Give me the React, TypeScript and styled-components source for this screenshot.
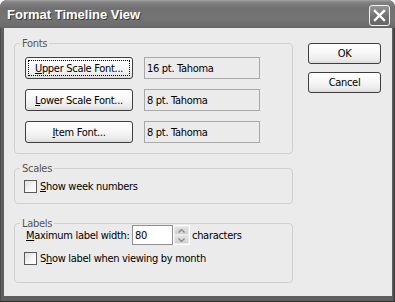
import React from "react";
import styled, { createGlobalStyle } from "styled-components";

const GlobalStyle = createGlobalStyle`
  html, body { margin: 0; padding: 0; background: #ffffff; }
  body {
    font-family: "DejaVu Sans Condensed", "DejaVu Sans", "Liberation Sans", sans-serif;
    font-size: 11px;
    letter-spacing: -0.3px;
    color: #000;
  }
  * { box-sizing: border-box; }
`;

const Window = styled.div`
  width: 395px;
  height: 302px;
  display: flex;
  flex-direction: column;
  border-radius: 7px 7px 0 0;
  overflow: hidden;
  background: #575757;
`;

const TitleBar = styled.div`
  height: 28px;
  flex: none;
  display: flex;
  justify-content: space-between;
  align-items: flex-start;
  padding: 0 5px 0 7px;
  background: linear-gradient(
    to bottom,
    #a4a4a4 0px,
    #848484 2px,
    #707070 8px,
    #747474 18px,
    #6c6c6c 26px,
    #666666 28px
  );
`;

const Title = styled.span`
  margin-top: 7px;
  font-family: "Liberation Sans", Arial, sans-serif;
  font-weight: bold;
  font-size: 13px;
  letter-spacing: 0;
  line-height: 16px;
  color: #ffffff;
  text-shadow: 1px 1px 0 #3a3a3a;
`;

const CloseButton = styled.div`
  margin-top: 5px;
  width: 21px;
  height: 21px;
  border: 1px solid #f2f2f2;
  border-radius: 3px;
  background: linear-gradient(to bottom, #959595, #6f6f6f 60%, #666666);
  display: flex;
  align-items: center;
  justify-content: center;
`;

const Frame = styled.div`
  flex: 1;
  display: flex;
  padding: 0 3px 5px 4px;
  background: linear-gradient(to right, #3c3c3c 0, #5f5f5f 1px, #5f5f5f 393px, #3c3c3c 394px);
  border-bottom: 1px solid #2e2e2e;
`;

const Client = styled.div`
  flex: 1;
  display: flex;
  gap: 15px;
  padding: 9px 0 0 10px;
  background: #ebebeb;
`;

const LeftColumn = styled.div`
  width: 279px;
  display: flex;
  flex-direction: column;
`;

const RightColumn = styled.div`
  padding-top: 6px;
  display: flex;
  flex-direction: column;
  gap: 8px;
`;

const Group = styled.fieldset<{ $mt?: number; $pt?: number; $pb?: number }>`
  margin: ${(p) => p.$mt ?? 0}px 0 0 0;
  padding: ${(p) => p.$pt ?? 0}px 10px ${(p) => p.$pb ?? 10}px 10px;
  border: 1px solid #d0d0d0;
  border-radius: 4px;
  min-width: 0;
  display: flex;
  flex-direction: column;
`;

const Legend = styled.legend`
  padding: 0 2px;
  margin-left: -5px;
  line-height: 13px;
  height: 13px;
  color: #555555;
`;

const FontRows = styled.div`
  display: flex;
  flex-direction: column;
  gap: 10px;
`;

const FontRow = styled.div`
  display: grid;
  grid-template-columns: 108px 116px;
  column-gap: 11px;
  height: 22px;
`;

const Button = styled.div<{ $focused?: boolean; $w?: number; $h?: number }>`
  position: relative;
  width: ${(p) => (p.$w ? `${p.$w}px` : "auto")};
  height: ${(p) => p.$h ?? 22}px;
  border: 1px solid #3e3e3e;
  border-radius: 3px;
  background: linear-gradient(to bottom, #ffffff 0%, #f7f7f7 45%, #ececec 80%, #dcdcdc 100%);
  display: flex;
  align-items: center;
  justify-content: center;
  line-height: 13px;
  white-space: nowrap;
  color: #000;
  ${(p) =>
    p.$focused &&
    `
    &::after {
      content: "";
      position: absolute;
      inset: 2px;
      border: 1px dotted #000;
    }
  `}
`;

const ReadBox = styled.div`
  height: 22px;
  border: 1px solid #a9a9a9;
  background: #ebebeb;
  padding-left: 2px;
  display: flex;
  align-items: center;
  line-height: 13px;
`;

const CheckRow = styled.div<{ $mt?: number }>`
  margin-top: ${(p) => p.$mt ?? 0}px;
  display: flex;
  align-items: center;
  gap: 3px;
  height: 13px;
  margin-left: -1px;
  line-height: 13px;
  white-space: nowrap;
`;

const CheckBox = styled.span`
  width: 13px;
  height: 13px;
  flex: none;
  border: 1px solid #5a5a5a;
  background: linear-gradient(135deg, #dcdcdc 0%, #f4f4f4 50%, #ffffff 100%);
`;

const WidthRow = styled.div`
  margin-top: -5px;
  display: flex;
  align-items: center;
  height: 20px;
`;

const FieldLabel = styled.span`
  width: 107px;
  flex: none;
  padding-left: 1px;
  line-height: 13px;
  white-space: nowrap;
`;

const NumberInput = styled.div`
  width: 41px;
  height: 20px;
  flex: none;
  border: 1px solid #8f8f8f;
  background: #ffffff;
  padding-left: 2px;
  display: flex;
  align-items: center;
  line-height: 13px;
`;

const Spinner = styled.div`
  width: 17px;
  height: 20px;
  flex: none;
  border: 1px solid #ffffff;
  background: #d9d9d9;
  display: flex;
  flex-direction: column;
`;

const SpinHalf = styled.div`
  flex: 1;
  display: flex;
  align-items: center;
  justify-content: center;
  background: linear-gradient(to bottom, #e3e3e3, #d0d0d0);
  border: 1px solid #eaeaea;
`;

const Suffix = styled.span`
  margin-left: 2px;
  line-height: 13px;
`;

const Chevron = ({ up }: { up?: boolean }) => (
  <svg width="7" height="4" viewBox="0 0 7 4">
    <path
      d={up ? "M0.5 3.5 L3.5 0.5 L6.5 3.5" : "M0.5 0.5 L3.5 3.5 L6.5 0.5"}
      fill="none"
      stroke="#8a8a8a"
      strokeWidth="1.3"
    />
  </svg>
);

const fontRows = [
  { key: "U", rest: "pper Scale Font...", value: "16 pt. Tahoma", focused: true },
  { key: "L", rest: "ower Scale Font...", value: "8 pt. Tahoma" },
  { key: "I", rest: "tem Font...", value: "8 pt. Tahoma" },
];

export default function App() {
  return (
    <>
      <GlobalStyle />
      <Window>
        <TitleBar>
          <Title>Format Timeline View</Title>
          <CloseButton>
            <svg width="13" height="13" viewBox="0 0 13 13">
              <path d="M2 2 L11 11 M11 2 L2 11" stroke="#ffffff" strokeWidth="2.4" strokeLinecap="square" />
            </svg>
          </CloseButton>
        </TitleBar>
        <Frame>
          <Client>
            <LeftColumn>
              <Group $pt={7} $pb={10}>
                <Legend>Fonts</Legend>
                <FontRows>
                  {fontRows.map((r) => (
                    <FontRow key={r.key}>
                      <Button $focused={r.focused}>
                        <span>
                          <u>{r.key}</u>
                          {r.rest}
                        </span>
                      </Button>
                      <ReadBox>{r.value}</ReadBox>
                    </FontRow>
                  ))}
                </FontRows>
              </Group>
              <Group $mt={8} $pt={5} $pb={10}>
                <Legend>Scales</Legend>
                <CheckRow>
                  <CheckBox />
                  <span>
                    <u>S</u>how week numbers
                  </span>
                </CheckRow>
              </Group>
              <Group $mt={13} $pt={0} $pb={17}>
                <Legend>Labels</Legend>
                <WidthRow>
                  <FieldLabel>
                    <u>M</u>aximum label width:
                  </FieldLabel>
                  <NumberInput>80</NumberInput>
                  <Spinner>
                    <SpinHalf>
                      <Chevron up />
                    </SpinHalf>
                    <SpinHalf>
                      <Chevron />
                    </SpinHalf>
                  </Spinner>
                  <Suffix>characters</Suffix>
                </WidthRow>
                <CheckRow $mt={7}>
                  <CheckBox />
                  <span>
                    S<u>h</u>ow label when viewing by month
                  </span>
                </CheckRow>
              </Group>
            </LeftColumn>
            <RightColumn>
              <Button $w={73} $h={21}>OK</Button>
              <Button $w={73} $h={21}>Cancel</Button>
            </RightColumn>
          </Client>
        </Frame>
      </Window>
    </>
  );
}
